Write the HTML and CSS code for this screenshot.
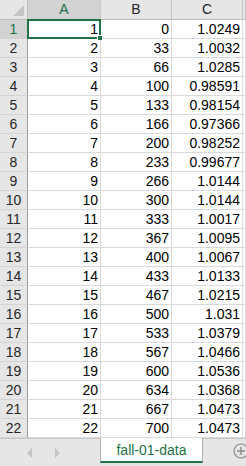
FILE: index.html
```html
<!DOCTYPE html>
<html lang="en">
<head>
  <meta charset="UTF-8" />
  <title>fall-01-data</title>
  <link rel="stylesheet" href="styles.css">
</head>
<body>
  <div class="sheet">
    <div class="grid" id="grid">
      <div class="corner"><span class="tri"></span></div>
      <div class="colhead active">A</div>
      <div class="colhead">B</div>
      <div class="colhead">C</div>
      <div class="colhead rest"></div>
    </div>
    <div class="tabbar">
      <div class="nav">
        <span class="arrow left"></span>
        <span class="arrow right"></span>
      </div>
      <div class="tab">fall-01-data</div>
      <div class="add">
        <svg width="16" height="16" viewBox="0 0 16 16">
          <circle cx="8" cy="8" r="7" fill="none" stroke="#8a8a8a" stroke-width="1.2"/>
          <path d="M8 4v8M4 8h8" stroke="#8a8a8a" stroke-width="1.4"/>
        </svg>
      </div>
    </div>
  </div>

  <script>
    const rows = [
      [1, 0, "1.0249"], [2, 33, "1.0032"], [3, 66, "1.0285"], [4, 100, "0.98591"],
      [5, 133, "0.98154"], [6, 166, "0.97366"], [7, 200, "0.98252"], [8, 233, "0.99677"],
      [9, 266, "1.0144"], [10, 300, "1.0144"], [11, 333, "1.0017"], [12, 367, "1.0095"],
      [13, 400, "1.0067"], [14, 433, "1.0133"], [15, 467, "1.0215"], [16, 500, "1.031"],
      [17, 533, "1.0379"], [18, 567, "1.0466"], [19, 600, "1.0536"], [20, 634, "1.0368"],
      [21, 667, "1.0473"], [22, 700, "1.0473"]
    ];
    const grid = document.getElementById("grid");
    rows.forEach((r, i) => {
      let html = `<div class="rowhead${i === 0 ? " active" : ""}">${i + 1}</div>`;
      html += `<div class="cell${i === 0 ? " selected" : ""}">${r[0]}</div>`;
      html += `<div class="cell">${r[1]}</div>`;
      html += `<div class="cell">${r[2]}</div>`;
      html += `<div class="cell rest"></div>`;
      grid.insertAdjacentHTML("beforeend", html);
    });
  </script>
</body>
</html>
```

FILE: styles.css
```css
*, *::before, *::after {
  box-sizing: border-box;
}

body {
  margin: 0;
  background: #ffffff;
  font-family: "Liberation Sans", Arial, sans-serif;
  font-size: 14px;
  color: #000;
  overflow: hidden;
}

.sheet {
  width: 246px;
  height: 466px;
  display: flex;
  flex-direction: column;
}

.grid {
  flex: 1;
  display: grid;
  grid-template-columns: 28px 73px 71px 71px 1fr;
  grid-template-rows: 20px;
  grid-auto-rows: 19px;
  align-content: start;
  overflow: hidden;
}

.corner {
  background: #e6e6e6;
  border-right: 1px solid #bdbdbd;
  border-bottom: 1px solid #bdbdbd;
  position: relative;
}

.tri {
  position: absolute;
  right: 3px;
  bottom: 3px;
  width: 0;
  height: 0;
  border-left: 11px solid transparent;
  border-bottom: 11px solid #c4c4c4;
}

.colhead {
  background: #e6e6e6;
  border-right: 1px solid #c8c8c8;
  border-bottom: 1px solid #bdbdbd;
  text-align: center;
  line-height: 19px;
  color: #262626;
}

.colhead.active {
  background: #d2d2d2;
  color: #217346;
}

.rowhead {
  background: #e6e6e6;
  border-right: 1px solid #9b9b9b;
  border-bottom: 1px solid #d4d4d4;
  text-align: center;
  line-height: 18px;
  color: #262626;
}

.rowhead.active {
  background: #d2d2d2;
  color: #217346;
}

.cell {
  border-right: 1px solid #d9d9d9;
  border-bottom: 1px solid #d9d9d9;
  text-align: right;
  padding-right: 2px;
  line-height: 18px;
  white-space: nowrap;
}

.cell.selected {
  border: 2px solid #217346;
  position: relative;
  line-height: 16px;
  padding-right: 1px;
  margin-top: -1px;
  margin-left: -1px;
}

.cell.selected::after {
  content: "";
  position: absolute;
  right: -4px;
  bottom: -4px;
  width: 6px;
  height: 6px;
  background: #217346;
  border: 1px solid #fff;
}

.tabbar {
  height: 28px;
  flex: none;
  background: #e6e6e6;
  border-top: 1px solid #c6c6c6;
  display: flex;
  align-items: stretch;
}

.nav {
  flex: none;
  width: 100px;
  display: flex;
  align-items: center;
  padding-left: 27px;
  gap: 23px;
}

.arrow {
  width: 0;
  height: 0;
  border-top: 5px solid transparent;
  border-bottom: 5px solid transparent;
}

.arrow.left {
  border-right: 5px solid #c4c4c4;
}

.arrow.right {
  border-left: 5px solid #c4c4c4;
}

.tab {
  flex: none;
  width: 103px;
  background: #ffffff;
  border-left: 1px solid #b0b0b0;
  border-right: 1px solid #b0b0b0;
  border-bottom: 2px solid #217346;
  margin-top: -1px;
  margin-bottom: 3px;
  color: #217346;
  text-align: center;
  line-height: 25px;
  font-size: 14px;
}

.add {
  flex: none;
  display: flex;
  align-items: center;
  padding-left: 30px;
  margin-top: -3px;
}
```
